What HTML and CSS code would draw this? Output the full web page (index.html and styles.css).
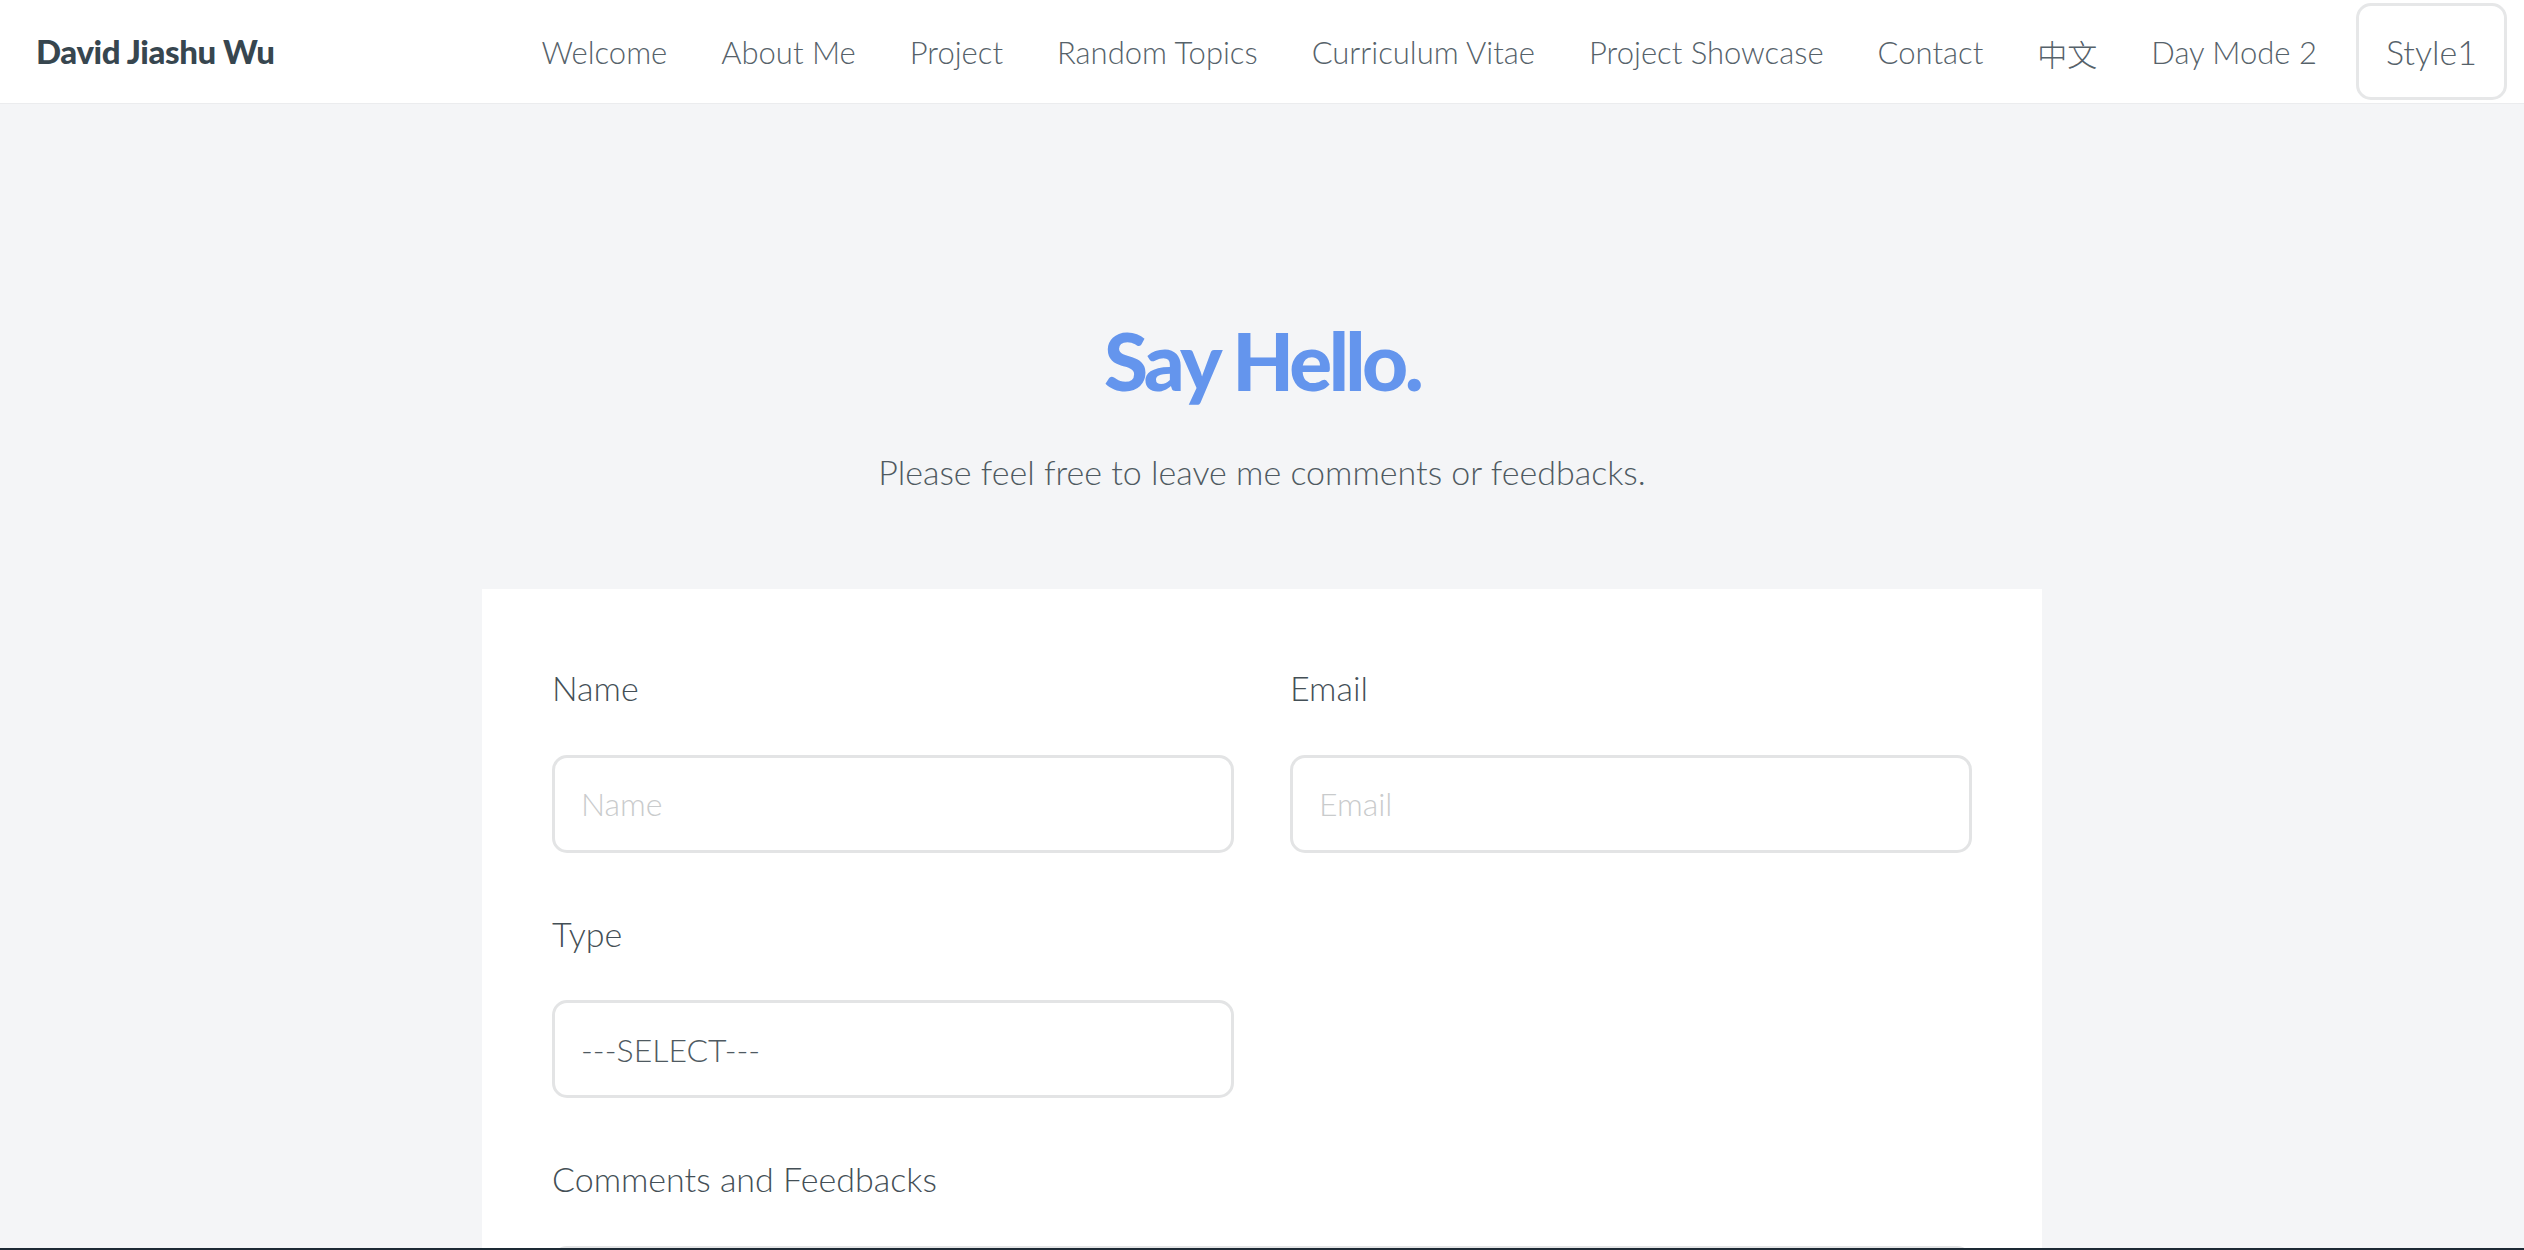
FILE: index.html
```html
<!DOCTYPE html>
<html lang="en">
<head>
<meta charset="utf-8">
<title>David Jiashu Wu - Contact</title>
<link rel="stylesheet" href="styles.css">
</head>
<body>
<header class="topbar">
  <a class="brand" href="#">David Jiashu Wu</a>
  <nav class="menu">
    <a class="menu-link" href="#">Welcome</a>
    <a class="menu-link" href="#">About Me</a>
    <a class="menu-link" href="#">Project</a>
    <a class="menu-link" href="#">Random Topics</a>
    <a class="menu-link" href="#">Curriculum Vitae</a>
    <a class="menu-link" href="#">Project Showcase</a>
    <a class="menu-link" href="#">Contact</a>
    <a class="menu-link cjk" href="#">中文</a>
    <a class="menu-link" href="#">Day Mode 2</a>
    <button class="style-btn" type="button">Style1</button>
  </nav>
</header>

<main class="contact">
  <h1 class="title">Say Hello.</h1>
  <p class="subtitle">Please feel free to leave me comments or feedbacks.</p>

  <form class="card">
    <div class="row">
      <div class="field">
        <label class="label" for="name">Name</label>
        <input class="control" id="name" type="text" placeholder="Name">
      </div>
      <div class="field">
        <label class="label" for="email">Email</label>
        <input class="control" id="email" type="email" placeholder="Email">
      </div>
    </div>
    <div class="row">
      <div class="field">
        <label class="label" for="type">Type</label>
        <select class="control select" id="type">
          <option>---SELECT---</option>
          <option>Comment</option>
          <option>Feedback</option>
        </select>
      </div>
      <div class="field"></div>
    </div>
    <div class="field full">
      <label class="label" for="msg">Comments and Feedbacks</label>
      <textarea class="control area" id="msg" placeholder="Comments and Feedbacks"></textarea>
    </div>
  </form>
</main>
<div class="bottom-edge"></div>
</body>
</html>
```

FILE: styles.css
```css
html {
  scrollbar-width: none;
}
html::-webkit-scrollbar {
  display: none;
}
body {
  margin: 0;
  background: #f4f5f7;
  font-family: Lato, "Noto Sans CJK SC", sans-serif;
  color: #4a555c;
}

.topbar {
  height: 103px;
  background: #ffffff;
  border-bottom: 1px solid #ebecee;
  display: flex;
  align-items: center;
  padding: 0 17px 0 36px;
}
.brand {
  font-weight: 900;
  font-size: 33px;
  line-height: 1.2;
  color: #37464f;
  text-decoration: none;
  letter-spacing: -0.4px;
  margin-right: auto;
}
.menu {
  display: flex;
  align-items: center;
  height: 100%;
}
.menu-link {
  font-size: 31px;
  font-weight: 300;
  line-height: 1.2;
  color: #56626a;
  text-decoration: none;
  padding: 3px 27px 0;
}
.menu-link.cjk {
  font-family: "Noto Sans CJK SC", sans-serif;
  font-weight: 300;
  font-size: 30px;
}
.style-btn {
  align-self: flex-start;
  margin-top: 3px;
  margin-left: 12px;
  height: 97px;
  padding: 0 27px;
  background: #ffffff;
  border: 3px solid #e6e7e8;
  border-radius: 15px;
  font-family: Lato, sans-serif;
  font-weight: 300;
  font-size: 34px;
  color: #56626a;
}

.contact {
  padding-top: 208px;
}
.title {
  margin: 0;
  text-align: center;
  font-size: 80px;
  line-height: 1.2;
  font-weight: 900;
  letter-spacing: -3.6px;
  color: #6495ed;
}
.subtitle {
  margin: 44px 0 0;
  text-align: center;
  font-size: 34px;
  line-height: 1.2;
  font-weight: 300;
  color: #4f5a61;
}

.card {
  width: 1420px;
  margin: 96px auto 0;
  padding: 79px 70px 80px;
  background: #ffffff;
}
.row {
  display: grid;
  grid-template-columns: 1fr 1fr;
  column-gap: 56px;
}
.field {
  display: flex;
  flex-direction: column;
  margin-bottom: 61px;
}
.label {
  font-size: 34px;
  line-height: 1.2;
  font-weight: 300;
  color: #444f56;
  margin-bottom: 46px;
}
.control {
  box-sizing: border-box;
  height: 98px;
  width: 100%;
  border: 3px solid #e3e4e5;
  border-radius: 15px;
  padding: 0 26px;
  background: #ffffff;
  font-family: Lato, sans-serif;
  font-weight: 300;
  font-size: 32px;
  color: #4f5a61;
  outline: none;
}
.control::placeholder {
  color: #c9cbcc;
}
.select {
  appearance: none;
  -webkit-appearance: none;
}
.area {
  height: 260px;
  padding-top: 24px;
  resize: none;
}

.bottom-edge {
  position: fixed;
  left: 0;
  right: 0;
  bottom: 0;
  height: 2px;
  background: #1d2a35;
}
```
